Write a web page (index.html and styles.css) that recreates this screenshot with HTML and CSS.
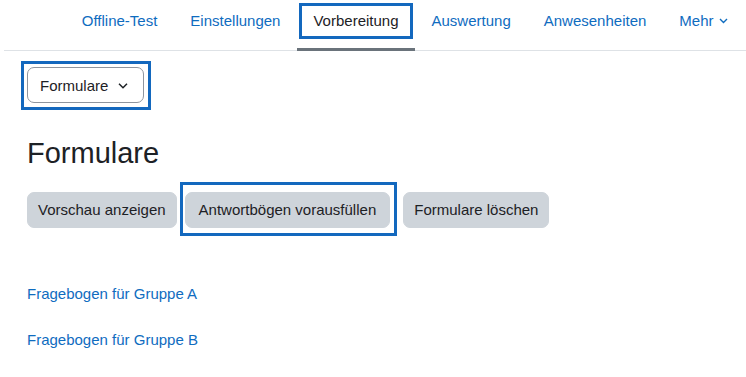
FILE: index.html
```html
<!DOCTYPE html>
<html lang="de">
<head>
<meta charset="utf-8">
<title>Formulare</title>
<link rel="stylesheet" href="styles.css">
</head>
<body>
<nav class="tabs">
  <ul class="tab-list">
    <li><a class="tab-link" href="#">Offline-Test</a></li>
    <li><a class="tab-link" href="#">Einstellungen</a></li>
    <li><a class="tab-link tab-active" href="#">Vorbereitung<span class="mark mark-tab"></span></a></li>
    <li><a class="tab-link" href="#">Auswertung</a></li>
    <li><a class="tab-link" href="#">Anwesenheiten</a></li>
    <li><a class="tab-link" href="#">Mehr<svg class="tab-caret" width="9" height="6" viewBox="0 0 9 6"><polyline points="1,1 4.5,4.5 8,1" fill="none" stroke="currentColor" stroke-width="1.4"/></svg></a></li>
  </ul>
</nav>
<main class="content">
  <div class="select-row">
    <div class="marked">
      <button class="select-btn" type="button">Formulare<svg class="select-caret" width="10" height="6" viewBox="0 0 10 6"><polyline points="1,0.8 5,4.8 9,0.8" fill="none" stroke="#1d2125" stroke-width="1.5"/></svg></button>
      <span class="mark mark-select"></span>
    </div>
  </div>
  <h2 class="page-title">Formulare</h2>
  <div class="actions">
    <button class="btn btn-preview" type="button">Vorschau anzeigen</button>
    <div class="marked btn-marked">
      <button class="btn btn-prefill" type="button">Antwortbögen vorausfüllen</button>
      <span class="mark mark-action"></span>
    </div>
    <button class="btn btn-delete" type="button">Formulare löschen</button>
  </div>
  <ul class="forms">
    <li><a class="form-link" href="#">Fragebogen für Gruppe A</a></li>
    <li><a class="form-link" href="#">Fragebogen für Gruppe B</a></li>
  </ul>
</main>
</body>
</html>
```
FILE: styles.css
```css
* { box-sizing: border-box; }

body {
  margin: 0;
  font-family: "Liberation Sans", Arial, sans-serif;
  font-size: 15px;
  color: #1d2125;
  background: #fff;
}

.tabs {
  margin-left: 4px;
}

.tab-list {
  list-style: none;
  margin: 0;
  padding: 0 2px 0 0;
  display: flex;
  justify-content: flex-end;
  height: 51px;
  border-bottom: 1px solid #dee2e6;
}

.tab-link {
  position: relative;
  display: flex;
  align-items: flex-start;
  height: 51px;
  margin-bottom: -1px;
  padding: 10px 16.5px 0;
  line-height: 22px;
  color: #0f6cbf;
  text-decoration: none;
  border-bottom: 3px solid transparent;
}

.tab-active {
  color: #1d2125;
  border-bottom-color: #6a737b;
}

.tab-caret {
  margin-left: 5px;
  margin-top: 8px;
}

.mark {
  position: absolute;
  border: 3px solid #1368be;
  pointer-events: none;
}

.mark-tab {
  left: 2px;
  right: 2px;
  top: 3px;
  height: 36px;
}

.content {
  padding-left: 27px;
}

.select-row {
  margin-top: 16px;
  display: flex;
}

.marked {
  position: relative;
  display: inline-block;
}

.select-btn {
  display: flex;
  align-items: center;
  height: 36px;
  padding: 0 15px 0 12px;
  font: inherit;
  color: #1d2125;
  background: #fff;
  border: 1px solid #8f959e;
  border-radius: 7px;
}

.select-caret {
  margin-left: 10px;
  margin-top: 1px;
}

.mark-select {
  top: -6px;
  left: -6px;
  right: -7px;
  bottom: -7px;
}

.page-title {
  margin: 33px 0 0;
  font-size: 29px;
  font-weight: 400;
  line-height: 35px;
}

.actions {
  margin-top: 21px;
  display: flex;
  align-items: flex-start;
}

.btn {
  display: block;
  height: 36px;
  padding: 6px 12px;
  font: inherit;
  line-height: 22px;
  color: #1d2125;
  background: #ced4da;
  border: 1px solid #ced4da;
  border-radius: 7px;
}

.btn-preview {
  padding: 6px 10px;
  margin-right: 8px;
}

.btn-prefill {
  padding: 6px 13px;
}

.btn-delete {
  padding: 6px 10px;
}

.btn-marked {
  margin-right: 13px;
}

.mark-action {
  top: -10px;
  left: -5px;
  right: -7px;
  bottom: -8px;
}

.forms {
  list-style: none;
  margin: 55px 0 0;
  padding: 0;
}

.forms li {
  line-height: 22px;
  margin-bottom: 24px;
}

.form-link {
  color: #0f6cbf;
  text-decoration: none;
}
```
